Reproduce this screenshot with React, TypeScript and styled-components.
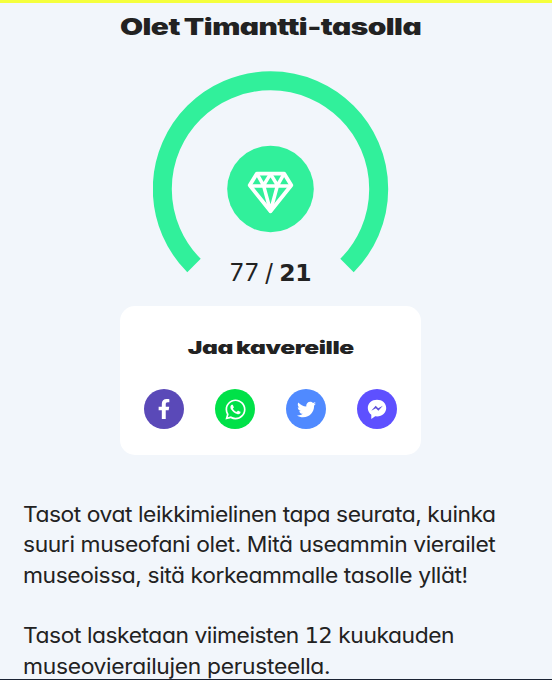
import React from "react";
import styled, { createGlobalStyle } from "styled-components";
import { FaFacebookF, FaTwitter, FaWhatsapp } from "react-icons/fa";

const GlobalStyle = createGlobalStyle`
  * { box-sizing: border-box; }
  body {
    margin: 0;
    background: #f2f6fb;
    color: #222;
    font-family: Inter, "Liberation Sans", sans-serif;
    font-feature-settings: "cv11" 1;
  }
`;

const Page = styled.main`
  height: 680px;
  overflow: hidden;
  display: flex;
  flex-direction: column;
  border-top: 3px solid #f5ff3d;
  border-bottom: 1px solid #1b2333;
`;

const Level = styled.section`
  width: 541px;
  display: flex;
  flex-direction: column;
  align-items: center;
`;

const Heading = styled.h1<{ $size: number; $stretch: number; $tracking: number }>`
  margin: 0;
  font-size: ${(p) => p.$size}px;
  line-height: 30px;
  font-weight: 900;
  white-space: nowrap;
  word-spacing: -1px;
  letter-spacing: ${(p) => p.$tracking}px;
  transform: scaleX(${(p) => p.$stretch});
`;

const Title = styled.div`
  padding-top: 9px;
  height: 68px;
`;

const Gauge = styled.svg`
  display: block;
  width: 236px;
  height: 202px;
`;

const Count = styled.div`
  height: 32px;
  margin-top: -16px;
  display: flex;
  align-items: baseline;
  justify-content: center;
  font-size: 24px;
  line-height: 32px;
  white-space: pre;
`;

const Visits = styled.span`
  font-weight: 400;
  letter-spacing: 1px;
`;

const Slash = styled.span`
  margin: 0 6px 0 5px;
`;

const Goal = styled.strong`
  font-family: "DejaVu Sans", sans-serif;
  font-size: 23.5px;
  font-weight: 700;
  letter-spacing: -0.5px;
`;

const Card = styled.section`
  width: 301px;
  height: 149px;
  margin-top: 17px;
  border-radius: 15px;
  background: #fff;
  display: flex;
  flex-direction: column;
  align-items: center;
  padding-top: 27px;
`;

const ShareRow = styled.div`
  width: 253px;
  margin-top: 26px;
  display: flex;
  justify-content: space-between;
`;

const ShareButton = styled.a<{ $color: string; $size: number }>`
  width: 40px;
  height: 40px;
  border-radius: 50%;
  display: flex;
  align-items: center;
  justify-content: center;
  color: #fff;
  background: ${(p) => p.$color};
  svg {
    width: ${(p) => p.$size}px;
    height: ${(p) => p.$size}px;
  }
`;

const Info = styled.section`
  margin: 44px 0 0 23px;
  display: flex;
  flex-direction: column;
  gap: 30px;
`;

const Paragraph = styled.p`
  margin: 0;
  font-size: 21.5px;
  line-height: 30.4px;
`;

const Line = styled.span<{ $tracking: number }>`
  display: block;
  height: 30.4px;
  white-space: nowrap;
  letter-spacing: ${(p) => p.$tracking}px;
  transform: scaleX(1.062);
  transform-origin: left;
`;

const Figure = styled.span`
  font-family: "DejaVu Sans", sans-serif;
  font-size: 21px;
  line-height: 1;
`;

export default function App() {
  return (
    <>
      <GlobalStyle />
      <Page>
        <Level>
          <Title>
            <Heading $size={22.5} $stretch={1.327} $tracking={-0.4}>Olet Timantti-tasolla</Heading>
          </Title>
          <Gauge viewBox="0 0 236 202">
            <g transform="translate(-0.5 0)">
              <path
                d="M41.5 194.5A108.2 108.2 0 1 1 194.5 194.5"
                fill="none"
                stroke="#31f09b"
                strokeWidth="19"
              />
              <circle cx="118" cy="118" r="43.3" fill="#31f09b" />
              <g fill="none" stroke="#fff" strokeWidth="3.8" strokeLinejoin="round">
                <path d="M104.4 102.6H131.6L138.8 114.3L118 140.3L97.2 114.3Z" />
                <path
                  d="M97.2 115H138.8M104.4 102.6L111 114.3L118 103L125 114.3L131.6 102.6M111 114.3L118 140L125 114.3"
                  strokeWidth="3.5"
                />
              </g>
            </g>
          </Gauge>
          <Count>
            <Visits>77</Visits>
            <Slash>/</Slash>
            <Goal>21</Goal>
          </Count>
          <Card>
            <Heading as="h2" $size={18} $stretch={1.367} $tracking={-0.3}>Jaa kavereille</Heading>
            <ShareRow>
              <ShareButton $color="#5a49b8" $size={20} aria-label="Facebook"><FaFacebookF /></ShareButton>
              <ShareButton $color="#00e148" $size={23} aria-label="WhatsApp"><FaWhatsapp /></ShareButton>
              <ShareButton $color="#508aff" $size={19} aria-label="Twitter"><FaTwitter /></ShareButton>
              <ShareButton $color="#5e50ff" $size={20} aria-label="Messenger">
                <svg viewBox="0 0 20 20">
                  <path d="M10 0.7C4.8 0.7 .8 4.2 .8 9C.8 11.7 2.2 14.2 4.3 15.8V20L8.2 17.3C14.4 18.2 19.2 14.3 19.2 9C19.2 4.2 15.2 .7 10 .7Z" fill="#fff" />
                  <path d="M4.3 11.8L8.7 6.8L11.2 9.2L15.8 6.7L11.4 11.7L8.9 9.2Z" fill="#5e50d8" />
                </svg>
              </ShareButton>
            </ShareRow>
          </Card>
        </Level>
        <Info>
          <Paragraph>
            <Line $tracking={-0.43}>Tasot ovat leikkimielinen tapa seurata, kuinka</Line>
            <Line $tracking={-0.38}>suuri museofani olet. Mitä useammin vierailet</Line>
            <Line $tracking={-0.4}>museoissa, sitä korkeammalle tasolle yllät!</Line>
          </Paragraph>
          <Paragraph>
            <Line $tracking={-0.42}>Tasot lasketaan viimeisten <Figure>12</Figure> kuukauden</Line>
            <Line $tracking={-0.29}>museovierailujen perusteella.</Line>
          </Paragraph>
        </Info>
      </Page>
    </>
  );
}
